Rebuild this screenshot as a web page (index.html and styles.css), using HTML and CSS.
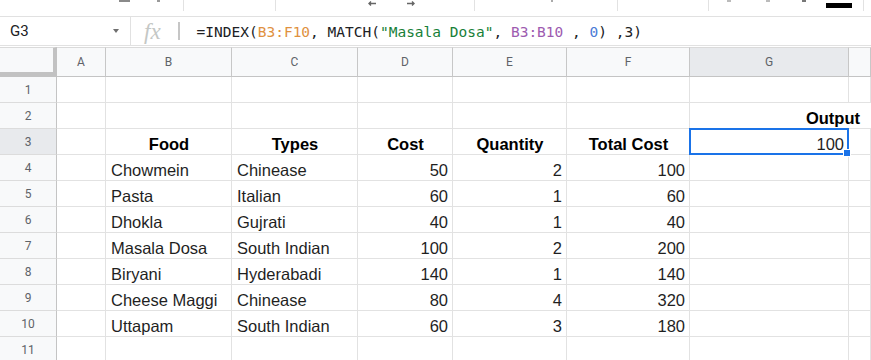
FILE: index.html
```html
<!DOCTYPE html>
<html lang="en">
<head>
    <meta charset="UTF-8">
    <meta name="viewport" content="width=device-width, initial-scale=1.0">
    <title>Food Sheet</title>
    <link rel="stylesheet" href="styles.css">
</head>
<body>
    <div class="toolbar">
        <svg width="871" height="16" viewBox="0 0 871 16">
            <rect x="119" y="0" width="11" height="2" fill="#8a8a8a"/>
            <rect x="157" y="0" width="3" height="2" fill="#9a9a9a"/>
            <rect x="183" y="0" width="1" height="11" fill="#e2e2e2"/>
            <rect x="275" y="0" width="1" height="11" fill="#e2e2e2"/>
            <path d="M376 3.5H369M371 1.5L369 3.5L371 5.5" stroke="#666" stroke-width="1.4" fill="none"/>
            <path d="M407 3.5H414M412 1.5L414 3.5L412 5.5" stroke="#666" stroke-width="1.4" fill="none"/>
            <rect x="474" y="0" width="1" height="11" fill="#e2e2e2"/>
            <rect x="551" y="0" width="2" height="2" fill="#aaa"/>
            <rect x="617" y="0" width="1" height="11" fill="#e2e2e2"/>
            <rect x="708" y="0" width="1" height="11" fill="#e2e2e2"/>
            <rect x="727" y="0" width="4" height="2" fill="#bbb"/>
            <rect x="766" y="0" width="4" height="2" fill="#bbb"/>
            <rect x="802" y="0" width="4" height="2" fill="#777"/>
            <rect x="826" y="3" width="26" height="5" fill="#000"/>
            <rect x="863" y="0" width="1" height="11" fill="#e2e2e2"/>
        </svg>
    </div>
    <div class="formula-bar">
        <div class="name-box">
            <span class="cell-ref">G3</span>
            <span class="caret"></span>
        </div>
        <span class="fx">fx</span>
        <span class="fx-divider"></span>
        <div class="formula">=INDEX(<span class="ref-a">B3:F10</span>, MATCH(<span class="str">"Masala Dosa"</span>, <span class="ref-b">B3:B10</span> , <span class="num">0</span>) ,3)</div>
    </div>
    <div class="grid" id="grid"></div>
    <script>
        const grid = document.getElementById('grid');
        const columns = ['A', 'B', 'C', 'D', 'E', 'F', 'G', 'H'];

        const items = [
            ['Chowmein', 'Chinease', 50, 2, 100],
            ['Pasta', 'Italian', 60, 1, 60],
            ['Dhokla', 'Gujrati', 40, 1, 40],
            ['Masala Dosa', 'South Indian', 100, 2, 200],
            ['Biryani', 'Hyderabadi', 140, 1, 140],
            ['Cheese Maggi', 'Chinease', 80, 4, 320],
            ['Uttapam', 'South Indian', 60, 3, 180]
        ];

        const cells = {
            2: { G: ['Output', 'bold right wide'] },
            3: {
                B: ['Food', 'bold center'],
                C: ['Types', 'bold center'],
                D: ['Cost', 'bold center'],
                E: ['Quantity', 'bold center'],
                F: ['Total Cost', 'bold center'],
                G: ['100', 'right selected']
            }
        };

        items.forEach((item, i) => {
            cells[i + 4] = {
                B: [item[0], ''],
                C: [item[1], ''],
                D: [item[2], 'right'],
                E: [item[3], 'right'],
                F: [item[4], 'right']
            };
        });

        function addCell(className, text) {
            const div = document.createElement('div');
            div.className = className;
            if (text !== undefined) div.textContent = text;
            grid.appendChild(div);
            return div;
        }

        addCell('corner');
        columns.forEach(col => {
            // column H is mostly off screen, its letter is not visible
            addCell('col-head' + (col === 'G' ? ' active' : ''), col === 'H' ? '' : col);
        });

        for (let row = 1; row <= 11; row++) {
            addCell('row-head' + (row === 3 ? ' active' : ''), row);
            const rowCells = cells[row] || {};
            let skip = false;
            columns.forEach(col => {
                if (skip) { skip = false; return; }
                const entry = rowCells[col];
                const div = addCell('cell' + (entry && entry[1] ? ' ' + entry[1] : ''), entry ? entry[0] : '');
                if (div.classList.contains('wide')) skip = true;
            });
        }
    </script>
</body>
</html>
```

FILE: styles.css
```css
body {
    margin: 0;
    background-color: #fff;
    font-family: Arial, "Liberation Sans", sans-serif;
    overflow: hidden;
}

.toolbar {
    height: 16px;
    border-bottom: 1px solid #e1e1e1;
}

.toolbar svg {
    display: block;
}

.formula-bar {
    display: flex;
    align-items: center;
    height: 28px;
    border-bottom: 1px solid #e1e1e1;
}

.name-box {
    width: 131px;
    height: 100%;
    box-sizing: border-box;
    display: flex;
    align-items: center;
    justify-content: space-between;
    padding: 0 11px 0 10px;
    border-right: 1px solid #e1e1e1;
}

.cell-ref {
    font-family: Roboto, "Liberation Sans", sans-serif;
    font-size: 15px;
    color: #202124;
}

.caret {
    width: 0;
    height: 0;
    border-left: 3.5px solid transparent;
    border-right: 3.5px solid transparent;
    border-top: 4px solid #6f6f6f;
}

.fx {
    margin-left: 13px;
    font-family: "Liberation Serif", serif;
    font-style: italic;
    font-size: 23px;
    color: #c4c7c5;
    line-height: 1;
}

.fx-divider {
    width: 2px;
    height: 18px;
    margin-left: 17px;
    background-color: #c6c6c6;
}

.formula {
    margin-left: 17px;
    padding-top: 2px;
    font-family: "DejaVu Sans Mono", monospace;
    font-size: 14.5px;
    color: #202124;
    white-space: nowrap;
}

.ref-a { color: #e0913f; }
.ref-b { color: #9d5bb0; }
.str { color: #188038; }
.num { color: #4a7bd6; }

.grid {
    display: grid;
    grid-template-columns: 57px 49px 126px 126px 95px 114px 123px 159px 22px;
    grid-template-rows: 30px;
    grid-auto-rows: 26px;
    margin-top: 1px;
}

.corner {
    background-color: #f8f9fa;
    border-top: 1px solid #dadada;
    border-right: 4px solid #c2c2c2;
    border-bottom: 5px solid #c2c2c2;
}

.col-head {
    display: flex;
    align-items: center;
    justify-content: center;
    background-color: #f8f9fa;
    border-top: 1px solid #dadada;
    border-right: 1px solid #c7c7c7;
    border-bottom: 1px solid #c4c4c4;
    font-family: Roboto, "Liberation Sans", sans-serif;
    font-size: 12px;
    color: #5f6368;
}

.row-head {
    display: flex;
    align-items: center;
    justify-content: center;
    background-color: #f8f9fa;
    border-right: 1px solid #c4c4c4;
    border-bottom: 1px solid #dcdcdc;
    font-family: Roboto, "Liberation Sans", sans-serif;
    font-size: 12px;
    color: #5f6368;
}

.col-head.active,
.row-head.active {
    background-color: #e8eaed;
}

.cell {
    display: flex;
    align-items: flex-end;
    padding: 0 4px 1px 5px;
    border-right: 1px solid #e2e2e2;
    border-bottom: 1px solid #e2e2e2;
    font-size: 16.5px;
    line-height: 18px;
    color: #1f1f1f;
    white-space: nowrap;
}

.cell.bold {
    font-weight: bold;
    color: #000;
}

.cell.center {
    justify-content: center;
}

.cell.right {
    justify-content: flex-end;
}

.cell.wide {
    grid-column: span 2;
    padding-right: 11px;
    border-right: none;
}

.cell.selected {
    position: relative;
}

.cell.selected::after {
    content: '';
    position: absolute;
    left: -1px;
    top: -1px;
    right: -1px;
    bottom: -1px;
    border: 2px solid #1a73e8;
}

.cell.selected::before {
    content: '';
    position: absolute;
    right: -3px;
    bottom: -3px;
    width: 6px;
    height: 6px;
    background-color: #1a73e8;
    border: 1px solid #fff;
    z-index: 1;
}
```
